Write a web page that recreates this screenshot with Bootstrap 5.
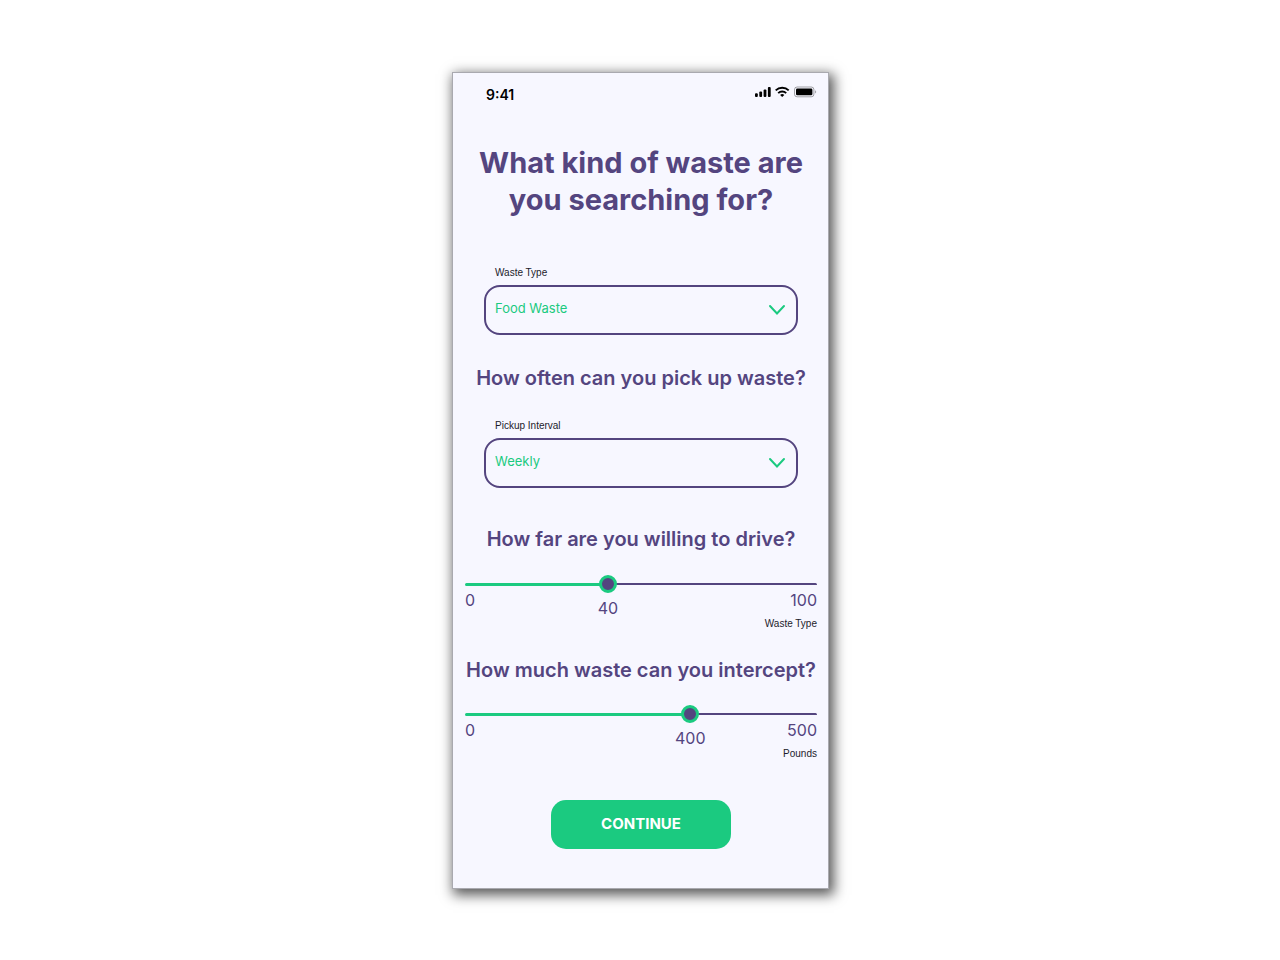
<!DOCTYPE html>
<html lang="en">
<head>
<meta charset="utf-8">
<meta name="viewport" content="width=device-width, initial-scale=1">
<title>Waste search</title>
<link href="https://cdn.jsdelivr.net/npm/bootstrap@5.3.0/dist/css/bootstrap.min.css" rel="stylesheet">
<style>
:root { --ink: #54457f; --mint: #1bca80; --paper: #f7f7ff; }
body { background: #fff; font-family: Inter, "Liberation Sans", sans-serif; color: var(--ink); }
main { padding: 1px 0 0 1px; }
.phone { width: 100%; max-width: 377px; background: var(--paper); border: 1px solid #a9a9af; box-shadow: 3px 4px 12px 2px rgba(0,0,0,.65); padding: 0 11px 39px 12px; }
.status { height: 44px; padding: 12px 0 0 21px; color: #000; }
.clock { font-size: 14px; line-height: 20px; font-weight: 600; }
h1 { font-size: 29px; line-height: 37px; font-weight: 700; margin: 27px 0 47px; }
h2 { font-size: 20px; line-height: 28px; font-weight: 600; white-space: nowrap; }
.ask-often { margin: 29px 0 26px; }
.ask-far { margin: 37px 0 22px; }
.ask-much { margin: 24px 0 21px; }
.field { padding: 0 19px; }
.caption { display: block; font-family: "Liberation Sans", Arial, sans-serif; font-size: 10px; line-height: 16px; color: #1c1b2b; }
.field .caption { margin: 0 0 4px 11px; }
.unit { margin-top: 9px; }
.form-select.pick { height: 50px; border: 2px solid var(--ink); border-radius: 16px; background-color: transparent; color: var(--mint); font-size: 13px; line-height: 20px; padding: 0 40px 4px 9px;
  background-image: url("data:image/svg+xml,%3Csvg xmlns='http://www.w3.org/2000/svg' viewBox='0 0 18 12'%3E%3Cpath d='M2 2l7 7.5L16 2' fill='none' stroke='%231bca80' stroke-width='2' stroke-linecap='round'/%3E%3C/svg%3E"); background-size: 18px 12px; background-position: right 10px center; }
.slide { display: block; width: 100%; height: 18px; margin: 0; appearance: none; -webkit-appearance: none; background: none; }
.slide::-webkit-slider-runnable-track { height: 3px; border-radius: 2px; background: linear-gradient(var(--mint), var(--mint)) left / var(--at) 3px no-repeat, linear-gradient(var(--ink), var(--ink)) left / 100% 2px no-repeat; }
.slide::-webkit-slider-thumb { -webkit-appearance: none; width: 18px; height: 18px; margin-top: -8px; border: 3px solid var(--mint); border-radius: 50%; background: var(--ink); }
.slide::-moz-range-track { height: 2px; background: var(--ink); }
.slide::-moz-range-progress { height: 3px; background: var(--mint); }
.slide::-moz-range-thumb { width: 12px; height: 12px; border: 3px solid var(--mint); background: var(--ink); }
.ends { font-size: 16px; line-height: 14px; }
.ends output { top: 8px; left: var(--at); transform: translateX(-50%); }
.action { margin-top: 38px; line-height: 0; }
.go { width: 180px; height: 49px; border-radius: 15px; font-size: 15px; font-weight: 700; --bs-btn-bg: var(--mint); --bs-btn-color: #fff; --bs-btn-hover-bg: #17b572; --bs-btn-hover-color: #fff; }
</style>
</head>
<body>
<main class="min-vh-100 d-flex justify-content-center align-items-center">
  <form class="phone">
    <div class="status d-flex justify-content-between align-items-start">
      <span class="clock">9:41</span>
      <svg width="62" height="14" viewBox="0 0 62 14" aria-hidden="true">
        <g fill="#000">
          <rect x="0" y="8.3" width="2.8" height="3.7" rx="1"/><rect x="4.3" y="6.6" width="2.8" height="5.4" rx="1"/><rect x="8.6" y="4.4" width="2.8" height="7.6" rx="1"/><rect x="12.9" y="2" width="2.8" height="10" rx="1"/>
        </g>
        <g fill="none" stroke="#000" stroke-width="1.9">
          <path d="M20.7 5.4a9.3 9.3 0 0 1 13 0"/><path d="M23.2 8.1a5.7 5.7 0 0 1 8 0"/>
        </g>
        <path d="M25.1 9.9a3.2 3.2 0 0 1 4.2 0L27.2 12z"/>
        <rect x="39.5" y="2" width="19.4" height="9.8" rx="2.6" fill="none" stroke="#000" stroke-opacity=".35"/>
        <rect x="41" y="3.5" width="16.4" height="6.8" rx="1.3"/>
        <path d="M60.2 5.3c1.3.6 1.3 2.7 0 3.3z" opacity=".4"/>
      </svg>
    </div>

    <h1 class="text-center">What kind of waste are<br>you searching for?</h1>

    <div class="field">
      <label class="caption" for="type">Waste Type</label>
      <select class="form-select pick" id="type"><option>Food Waste</option></select>
    </div>

    <h2 class="d-flex justify-content-center ask-often">How often can you pick up waste?</h2>

    <div class="field">
      <label class="caption" for="interval">Pickup Interval</label>
      <select class="form-select pick" id="interval"><option>Weekly</option></select>
    </div>

    <h2 class="d-flex justify-content-center ask-far"><label for="far">How far are you willing to drive?</label></h2>
    <div style="--at: 40.6%">
      <input class="slide" id="far" type="range" min="0" max="100" value="40">
      <div class="ends position-relative d-flex justify-content-between">
        <span>0</span><output class="position-absolute" for="far">40</output><span>100</span>
      </div>
      <span class="caption unit text-end">Waste Type</span>
    </div>

    <h2 class="d-flex justify-content-center ask-much"><label for="much">How much waste can you intercept?</label></h2>
    <div style="--at: 64%">
      <input class="slide" id="much" type="range" min="0" max="500" value="324" aria-valuetext="400">
      <div class="ends position-relative d-flex justify-content-between">
        <span>0</span><output class="position-absolute" for="much">400</output><span>500</span>
      </div>
      <span class="caption unit text-end">Pounds</span>
    </div>

    <div class="text-center action"><button class="btn go" type="button">CONTINUE</button></div>
  </form>
</main>
<script src="https://cdn.jsdelivr.net/npm/bootstrap@5.3.0/dist/js/bootstrap.bundle.min.js"></script>
</body>
</html>
